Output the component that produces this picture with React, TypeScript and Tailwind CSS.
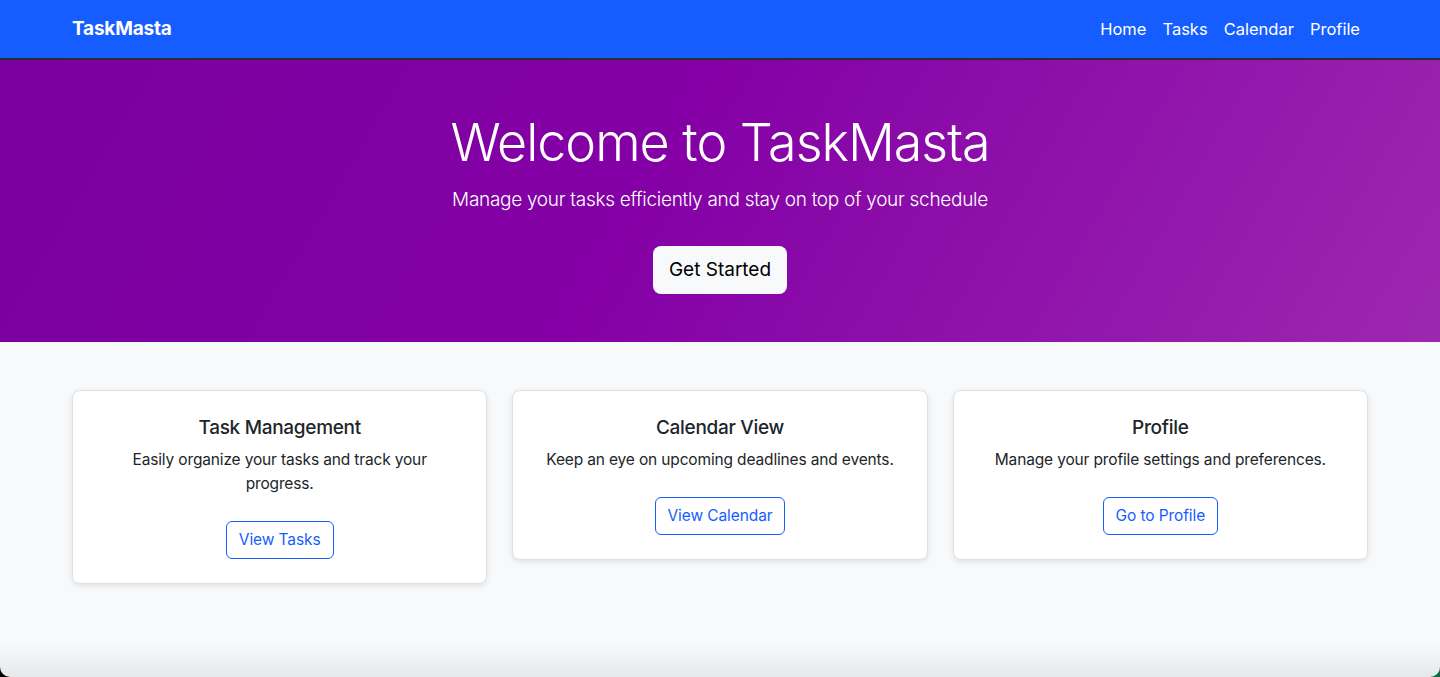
import React from 'react';

const features = [
    {
        title: 'Task Management',
        text: 'Easily organize your tasks and track your progress.',
        action: 'View Tasks',
    },
    {
        title: 'Calendar View',
        text: 'Keep an eye on upcoming deadlines and events.',
        action: 'View Calendar',
    },
    {
        title: 'Profile',
        text: 'Manage your profile settings and preferences.',
        action: 'Go to Profile',
    },
];

const navLinks = ['Home', 'Tasks', 'Calendar', 'Profile'];

export default function App() {
    return (
        <div className="h-[677px] bg-[linear-gradient(90deg,#000_0%,#000_50%,#0b6b45_100%)] font-['Inter',sans-serif] text-[#212529]">
            <div className="h-full flex flex-col overflow-hidden rounded-b-[10px] bg-[#f8f9fa]">
                <nav className="h-[58px] shrink-0 bg-[#165dff] border-b-2 border-[#2b2d33] box-content">
                    <div className="w-[1320px] mx-auto px-3 pt-[1px] h-full flex items-center justify-between">
                        <a href="#" className="text-white text-[19px] font-bold tracking-[-0.2px]">TaskMasta</a>
                        <ul className="flex items-center">
                            {navLinks.map((link) => (
                                <li key={link}>
                                    <a href="#" className="block px-2 text-white text-[16.5px]">{link}</a>
                                </li>
                            ))}
                        </ul>
                    </div>
                </nav>

                <section className="shrink-0 h-[282px] bg-[linear-gradient(120deg,#7a009e_0%,#8400a6_45%,#9c27b0_100%)] text-white text-center pt-[52px]">
                    <h1 className="text-[52px] font-light leading-[1.2] tracking-[-1px]">Welcome to TaskMasta</h1>
                    <p className="mt-[11px] text-[19px] font-light leading-[30px] tracking-[-0.3px]">Manage your tasks efficiently and stay on top of your schedule</p>
                    <button className="mt-[31px] h-12 px-4 rounded-lg bg-[#f8f9fa] text-black text-[19px]">Get Started</button>
                </section>

                <main className="flex-1 relative">
                    <div className="w-[1320px] mx-auto px-3 pt-12 grid grid-cols-3 gap-[25px] items-start">
                        {features.map((f) => (
                            <div key={f.title} className="bg-white border border-[#dee2e6] rounded-lg shadow-[0_2px_6px_rgba(0,0,0,0.1)] px-7 pt-[25px] pb-6 text-center">
                                <h5 className="text-[19px] font-medium leading-6 tracking-[-0.3px]">{f.title}</h5>
                                <p className="mt-2 text-[15.5px] leading-6 tracking-[-0.15px]">{f.text}</p>
                                <button className="mt-[25px] h-[38px] px-3 rounded-md border border-[#165dff] text-[#165dff] text-[15.5px] tracking-[-0.1px]">{f.action}</button>
                            </div>
                        ))}
                    </div>
                    <div className="absolute left-0 right-0 bottom-0 h-[34px] bg-[linear-gradient(180deg,rgba(0,0,0,0)_0%,rgba(0,0,0,0.07)_100%)]" />
                </main>
            </div>
        </div>
    );
}
